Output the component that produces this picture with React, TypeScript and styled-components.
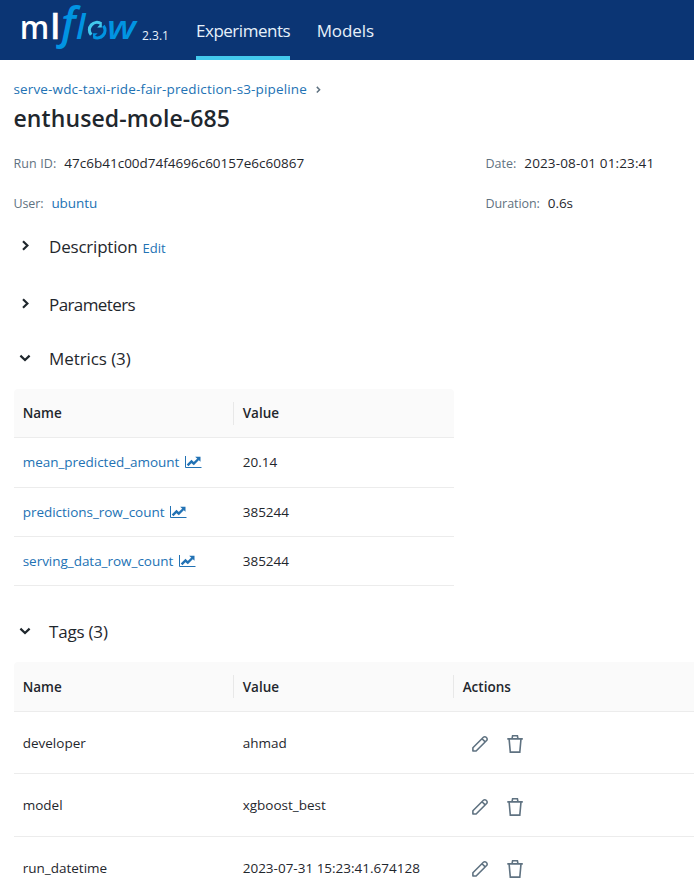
import React from 'react';
import styled, { createGlobalStyle } from 'styled-components';

const GlobalStyle = createGlobalStyle`
  * { box-sizing: border-box; }
  body {
    margin: 0;
    background: #fff;
    color: #1f272d;
    font-family: 'Open Sans', 'Noto Sans', sans-serif;
    font-size: 13.5px;
  }
`;

const Page = styled.div`
  height: 896px;
  overflow: hidden;
`;

const TopBar = styled.header`
  display: flex;
  height: 60px;
  background: #0b3574;
  color: #e7f1fb;
`;

const Brand = styled.div`
  display: flex;
  width: 196px;
`;

const Version = styled.span`
  margin: 27px 0 0 2px;
  font-size: 12px;
  line-height: 18px;
`;

const Nav = styled.nav`
  display: flex;
  gap: 26.5px;
`;

const NavLink = styled.a<{ $active?: boolean; $tracking: number }>`
  height: 60px;
  padding-top: 19px;
  font-size: 17px;
  line-height: 24px;
  letter-spacing: ${(p) => p.$tracking}px;
  white-space: nowrap;
  border-bottom: 4px solid ${(p) => (p.$active ? '#43c9ed' : 'transparent')};
`;

const Content = styled.main`
  padding: 19px 0 0 14px;
`;

const Breadcrumb = styled.div`
  display: flex;
  align-items: center;
  gap: 8px;
  height: 20px;
  margin-left: -0.5px;
  color: #5f7281;
`;

const Link = styled.a<{ $tracking?: number }>`
  color: #2272b4;
  letter-spacing: ${(p) => p.$tracking ?? 0}px;
`;

const Title = styled.h1`
  margin: 3px 0 19px -0.5px;
  font-size: 23px;
  font-weight: 600;
  line-height: 32px;
  letter-spacing: 0.1px;
`;

const MetaGrid = styled.div`
  display: grid;
  grid-template-columns: 472px 1fr;
  row-gap: 20px;
  margin: 0 0 22px -0.5px;
`;

const MetaItem = styled.div`
  display: flex;
  align-items: baseline;
  gap: 8px;
  height: 20px;
  line-height: 20px;
`;

const MetaLabel = styled.span<{ $tracking?: number }>`
  color: #5f7281;
  font-size: 12.5px;
  letter-spacing: ${(p) => p.$tracking ?? 0}px;
`;

const MetaValue = styled.span<{ $tracking?: number }>`
  letter-spacing: ${(p) => p.$tracking ?? 0}px;
`;

const SectionHead = styled.div<{ $after: number }>`
  display: flex;
  align-items: center;
  height: 24px;
  margin-bottom: ${(p) => p.$after}px;
`;

const ChevronSlot = styled.span`
  display: flex;
  width: 35px;
  padding: 0 0 2px 4px;
`;

const SectionTitle = styled.h2<{ $tracking: number }>`
  margin: 0;
  font-size: 17px;
  font-weight: 400;
  line-height: 24px;
  letter-spacing: ${(p) => p.$tracking}px;
`;

const EditLink = styled.a`
  margin: 2px 0 0 5px;
  color: #2272b4;
  font-size: 13px;
`;

const Table = styled.div<{ $wide?: boolean; $after?: number }>`
  width: ${(p) => (p.$wide ? '700px' : '440px')};
  margin-bottom: ${(p) => p.$after ?? 0}px;
`;

const Row = styled.div<{ $height: number; $head?: boolean; $nudge?: number }>`
  display: grid;
  grid-template-columns: 220px 220px 1fr;
  align-items: center;
  height: ${(p) => p.$height}px;
  padding-bottom: ${(p) => p.$nudge ?? 0}px;
  border-bottom: 1px solid #ececec;
  border-radius: ${(p) => (p.$head ? '4px 4px 0 0' : '0')};
  background: ${(p) => (p.$head ? '#fafafa' : 'transparent')};
  font-weight: ${(p) => (p.$head ? 600 : 400)};
`;

const Cell = styled.div<{ $divided?: boolean }>`
  display: flex;
  align-items: center;
  gap: 5.5px;
  height: 23px;
  padding-left: 8.7px;
  line-height: 18px;
  border-right: 1px solid ${(p) => (p.$divided ? '#e8e8e8' : 'transparent')};
  white-space: nowrap;
`;

const Actions = styled.div`
  display: flex;
  gap: 17px;
  padding: 3px 0 0 17px;
`;

const Logo = () => (
  <svg width="140" height="60" viewBox="0 0 140 60" fontFamily="'Open Sans', sans-serif">
    <g fill="#fff" fontWeight="600">
      <text x="19.8" y="39.3" fontSize="33" textLength="29.5" lengthAdjust="spacingAndGlyphs">m</text>
      <text x="50.2" y="39.3" fontSize="34.5" textLength="10" lengthAdjust="spacingAndGlyphs" stroke="#fff" strokeWidth="0.3">l</text>
    </g>
    <g fill="#0194e2" fontStyle="italic" fontWeight="600">
      <text x="61" y="38.6" fontSize="43">f</text>
      <text x="76" y="39.3" fontSize="34.5">l</text>
      <text x="107" y="39.3" fontSize="33" textLength="29" lengthAdjust="spacingAndGlyphs">w</text>
    </g>
    <g fill="none" strokeWidth="3.2">
      <path d="M91.2 34.8A7.5 7.5 0 0 1 101.2 23.8" stroke="#43c9ed" />
      <path d="M103.4 25.8A7.5 7.5 0 0 1 93.6 36.8" stroke="#0194e2" />
    </g>
    <path d="M101.8 22.8v4.6h-4.6z" fill="#43c9ed" />
    <path d="M93 38v-4.8h4.6z" fill="#0194e2" />
  </svg>
);

const Chevron = ({ open = false }: { open?: boolean }) => (
  <svg width="14" height="14" viewBox="0 0 14 14" fill="none" stroke="#1f272d" strokeWidth="2.2">
    <path d={open ? 'M2.4 4.6L7 9l4.6-4.4' : 'M5 2.2L9.4 6.5 5 10.8'} />
  </svg>
);

const CrumbChevron = () => (
  <svg width="8" height="10" viewBox="0 0 8 10" fill="none" stroke="#5f7281" strokeWidth="1.5">
    <path d="M1.8 2.9L4.6 5.7 1.8 8.5" />
  </svg>
);

const ChartIcon = () => (
  <svg width="17" height="13" viewBox="0 0 17 13" fill="none" stroke="#2272b4">
    <path d="M.5 0v11.5H16.5" strokeWidth="1" />
    <path d="M2.6 9.4l3.9-3.9L8.8 7.6 13.4 3" strokeWidth="2.4" />
    <path d="M10.2 .8h5.3v5z" fill="#2272b4" stroke="none" />
  </svg>
);

const PencilIcon = () => (
  <svg width="18" height="18" viewBox="0 0 18 18" fill="none" stroke="#5f7281" strokeWidth="1.6" strokeLinejoin="round">
    <path d="M1.9 16v-3.2L12.4 2.3a1.9 1.9 0 0 1 2.7 0l.5.5a1.9 1.9 0 0 1 0 2.7L5.1 16zM11 3.7l3.2 3.2" />
  </svg>
);

const TrashIcon = () => (
  <svg width="18" height="18" viewBox="0 0 18 18" fill="none" stroke="#5f7281" strokeWidth="1.6">
    <path d="M1.3 3.9h15.5M6 3.9l.6-3.1h4.8l.6 3.1M3.1 3.9l1.2 13.2h9.5L15 3.9" />
  </svg>
);

const metrics = [
  { name: 'mean_predicted_amount', value: '20.14', height: 50, nudge: 1 },
  { name: 'predictions_row_count', value: '385244', height: 49, nudge: 0 },
  { name: 'serving_data_row_count', value: '385244', height: 49, nudge: 0 },
];

const tags = [
  { name: 'developer', value: 'ahmad', height: 62 },
  { name: 'model', value: 'xgboost_best', height: 63 },
  { name: 'run_datetime', value: '2023-07-31 15:23:41.674128', height: 62 },
];

export default function App() {
  return (
    <Page>
      <GlobalStyle />
      <TopBar>
        <Brand>
          <Logo />
          <Version>2.3.1</Version>
        </Brand>
        <Nav>
          <NavLink $active $tracking={-0.48}>Experiments</NavLink>
          <NavLink $tracking={-0.1}>Models</NavLink>
        </Nav>
      </TopBar>
      <Content>
        <Breadcrumb>
          <Link $tracking={0.15}>serve-wdc-taxi-ride-fair-prediction-s3-pipeline</Link>
          <CrumbChevron />
        </Breadcrumb>
        <Title>enthused-mole-685</Title>
        <MetaGrid>
          <MetaItem>
            <MetaLabel $tracking={0.1}>Run ID:</MetaLabel>
            <MetaValue>47c6b41c00d74f4696c60157e6c60867</MetaValue>
          </MetaItem>
          <MetaItem>
            <MetaLabel>Date:</MetaLabel>
            <MetaValue $tracking={0.14}>2023-08-01 01:23:41</MetaValue>
          </MetaItem>
          <MetaItem>
            <MetaLabel $tracking={-0.12}>User:</MetaLabel>
            <Link $tracking={-0.05}>ubuntu</Link>
          </MetaItem>
          <MetaItem>
            <MetaLabel $tracking={-0.07}>Duration:</MetaLabel>
            <MetaValue $tracking={-0.05}>0.6s</MetaValue>
          </MetaItem>
        </MetaGrid>
        <SectionHead $after={34}>
          <ChevronSlot><Chevron /></ChevronSlot>
          <SectionTitle $tracking={-0.2}>Description</SectionTitle>
          <EditLink>Edit</EditLink>
        </SectionHead>
        <SectionHead $after={30}>
          <ChevronSlot><Chevron /></ChevronSlot>
          <SectionTitle $tracking={-0.6}>Parameters</SectionTitle>
        </SectionHead>
        <SectionHead $after={18}>
          <ChevronSlot><Chevron open /></ChevronSlot>
          <SectionTitle $tracking={-0.08}>Metrics (3)</SectionTitle>
        </SectionHead>
        <Table $after={34}>
          <Row $head $height={49}>
            <Cell $divided>Name</Cell>
            <Cell>Value</Cell>
          </Row>
          {metrics.map((m) => (
            <Row key={m.name} $height={m.height} $nudge={m.nudge}>
              <Cell>
                <Link $tracking={-0.03}>{m.name}</Link>
                <ChartIcon />
              </Cell>
              <Cell>{m.value}</Cell>
            </Row>
          ))}
        </Table>
        <SectionHead $after={18}>
          <ChevronSlot><Chevron open /></ChevronSlot>
          <SectionTitle $tracking={-0.2}>Tags (3)</SectionTitle>
        </SectionHead>
        <Table $wide>
          <Row $head $height={50}>
            <Cell $divided>Name</Cell>
            <Cell $divided>Value</Cell>
            <Cell>Actions</Cell>
          </Row>
          {tags.map((t) => (
            <Row key={t.name} $height={t.height}>
              <Cell>{t.name}</Cell>
              <Cell>{t.value}</Cell>
              <Actions>
                <PencilIcon />
                <TrashIcon />
              </Actions>
            </Row>
          ))}
        </Table>
      </Content>
    </Page>
  );
}
